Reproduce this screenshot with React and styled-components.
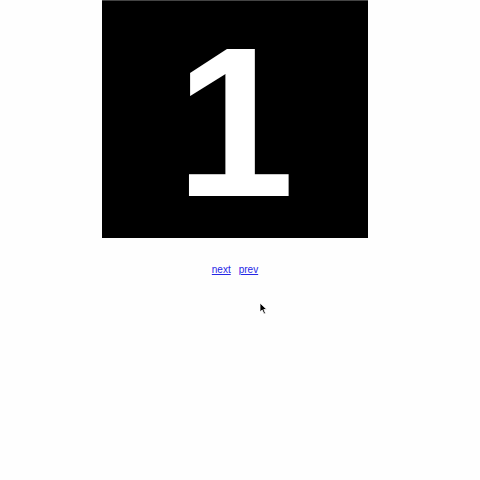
import React from 'react'
import styled, { createGlobalStyle } from 'styled-components';

const Global = createGlobalStyle`
  html, body {
    margin: 0;
    padding: 0;
    background: #fefefe;
    font-family: "Liberation Sans", Arial, sans-serif;
  }
`;

const Page = styled.div`
  width: 470px;
  height: 480px;
  display: flex;
  flex-direction: column;
  align-items: center;
  position: relative;
`;

const Slide = styled.div`
  width: 266px;
  height: 238px;
  background: #000;
  border-top: 1px solid #444;
  box-sizing: border-box;
  display: flex;
  align-items: center;
  justify-content: center;
  color: #fff;
  font-family: "Liberation Sans", Arial, sans-serif;
  font-weight: 700;
  font-size: 214px;
  line-height: 1;
  padding-top: 4px;
`;

const Nav = styled.div`
  margin-top: 26px;
  display: flex;
  gap: 8px;
  font-size: 10px;
`;

const NavLink = styled.a`
  color: #2626e6;
  text-decoration: underline;
  cursor: pointer;
`;

const Cursor = styled.svg`
  position: absolute;
  left: 259px;
  top: 302px;
`;

const App = () => {
  return (
    <>
      <Global />
      <Page lang="en">
        <Slide>1</Slide>
        <Nav>
          <NavLink href="#">next</NavLink>
          <NavLink href="#">prev</NavLink>
        </Nav>
        <Cursor width="9" height="13" viewBox="0 0 9 13">
          <path d="M1 1 L1 10 L3.2 8 L5 12 L6.5 11.3 L4.8 7.5 L7.8 7.5 Z" fill="#000" stroke="#fff" strokeWidth="0.8" />
        </Cursor>
      </Page>
    </>
  )
}

export default App;
